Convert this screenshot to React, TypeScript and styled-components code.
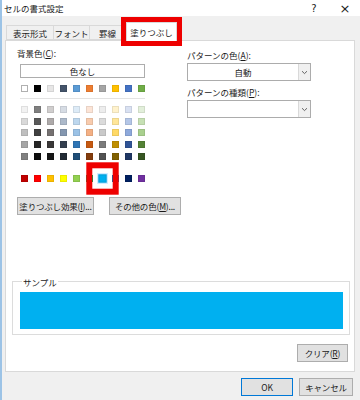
import React from 'react';
import styled, { createGlobalStyle } from 'styled-components';

const GlobalStyle = createGlobalStyle`
  html, body {
    margin: 0;
    padding: 0;
    background: #f0f0f0;
  }
  * {
    box-sizing: border-box;
  }
`;

const themeRow = ['#FFFFFF', '#000000', '#E7E6E6', '#44546A', '#5B9BD5', '#ED7D31', '#A5A5A5', '#FFC000', '#4472C4', '#70AD47'];
const tintRows = [
  ['#F2F2F2', '#7F7F7F', '#D0CECE', '#D6DCE4', '#DDEBF7', '#FCE4D6', '#EDEDED', '#FFF2CC', '#D9E1F2', '#E2EFDA'],
  ['#D9D9D9', '#595959', '#AEAAAA', '#ACB9CA', '#BDD7EE', '#F8CBAD', '#DBDBDB', '#FFE699', '#B4C6E7', '#C6E0B4'],
  ['#BFBFBF', '#404040', '#757171', '#8497B0', '#9BC2E6', '#F4B084', '#C9C9C9', '#FFD966', '#8EA9DB', '#A9D08E'],
  ['#A6A6A6', '#262626', '#3A3838', '#333F4F', '#2F75B5', '#C65911', '#7B7B7B', '#BF8F00', '#305496', '#548235'],
  ['#808080', '#0D0D0D', '#161616', '#222B35', '#1F4E78', '#833C0C', '#525252', '#806000', '#203764', '#375623'],
];
const standardRow = ['#C00000', '#FF0000', '#FFC000', '#FFFF00', '#92D050', '#00B050', '#00B0F0', '#0070C0', '#002060', '#7030A0'];
const SELECTED = 6;

const tabs = ['表示形式', 'フォント', '罫線', '塗りつぶし'];
const tabWidths = [48, 37, 37, 51];

const Window = styled.div`
  width: 360px;
  height: 400px;
  display: flex;
  flex-direction: column;
  border-left: 2px solid #9cc3e6;
  background: #f0f0f0;
  font-family: 'Noto Sans CJK JP', 'Noto Sans', sans-serif;
  font-size: 8.5px;
  color: #1a1a1a;
  overflow: hidden;
`;

const TitleBar = styled.div`
  height: 16px;
  background: #fff;
  display: flex;
  align-items: center;
  padding-left: 2px;
`;

const Title = styled.span`
  flex: 1;
`;

const TitleButton = styled.span<{ $w: number; $size: number }>`
  width: ${(p) => p.$w}px;
  text-align: center;
  font-family: 'DejaVu Sans', sans-serif;
  font-size: ${(p) => p.$size}px;
  color: #222;
`;

const Body = styled.div`
  flex: 1;
  display: flex;
  flex-direction: column;
  padding: 6px 3px 0 3px;
`;

const TabRow = styled.div`
  display: flex;
  align-items: flex-end;
  height: 18px;
  padding-left: 1px;
`;

const Tab = styled.div<{ $active?: boolean; $w: number }>`
  width: ${(p) => p.$w}px;
  height: ${(p) => (p.$active ? 19 : 15)}px;
  margin-bottom: ${(p) => (p.$active ? -1 : 0)}px;
  margin-left: ${(p) => (p.$active ? 1 : 0)}px;
  margin-right: -1px;
  display: flex;
  align-items: center;
  justify-content: center;
  white-space: nowrap;
  background: ${(p) => (p.$active ? '#fff' : '#f0f0f0')};
  border: 1px solid #d9d9d9;
  border-bottom: ${(p) => (p.$active ? 'none' : '1px solid #d9d9d9')};
  position: relative;
  z-index: ${(p) => (p.$active ? 2 : 1)};
  outline: ${(p) => (p.$active ? '5px solid #ee0000' : 'none')};
`;

const Panel = styled.div`
  width: 350px;
  height: 332px;
  background: #fff;
  border: 1px solid #d9d9d9;
  display: flex;
  flex-direction: column;
  padding: 6px 6px 8px 11px;
`;

const Columns = styled.div`
  display: flex;
`;

const LeftCol = styled.div`
  width: 170px;
  display: flex;
  flex-direction: column;
`;

const RightCol = styled.div`
  display: flex;
  flex-direction: column;
  padding-top: 2px;
`;

const Label = styled.div`
  height: 12px;
  line-height: 12px;
  white-space: nowrap;
`;

const Btn = styled.div<{ $w: number; $default?: boolean }>`
  width: ${(p) => p.$w}px;
  height: 18px;
  display: flex;
  align-items: center;
  justify-content: center;
  background: #e1e1e1;
  border: 1px solid ${(p) => (p.$default ? '#0078d7' : '#adadad')};
  white-space: nowrap;
  letter-spacing: -0.2px;
`;

const NoColor = styled.div`
  width: 125px;
  height: 14px;
  margin: 5px 0 0 3px;
  border: 1px solid #adadad;
  display: flex;
  align-items: center;
  justify-content: center;
`;

const Palette = styled.div<{ $mt: number }>`
  display: grid;
  grid-template-columns: repeat(10, 7px);
  column-gap: 6px;
  row-gap: 4.7px;
  margin: ${(p) => p.$mt}px 0 0 4px;
`;

const Swatch = styled.div<{ $c: string; $selected?: boolean }>`
  width: 7px;
  height: 7px;
  background: ${(p) => p.$c};
  border: 1px solid ${(p) => (p.$c === '#FFFFFF' ? '#b0b0b0' : 'rgba(0,0,0,0.08)')};
  ${(p) =>
    p.$selected &&
    `
    transform: scale(1.2);
    box-shadow: 0 0 0 1px #cde8ff;
    outline: 5px solid #ee0000;
    outline-offset: 5px;
    position: relative;
    z-index: 2;
  `}
`;

const Separator = styled.div`
  width: 125px;
  height: 1px;
  background: #e3e3e3;
  margin: 6px 0 0 3px;
`;

const ButtonRow = styled.div`
  display: flex;
  gap: 15px;
  margin-top: 15px;
`;

const Combo = styled.div`
  width: 124px;
  height: 18px;
  border: 1px solid #acacac;
  background: #fff;
  display: flex;
  margin: 2px 0 5px 0;
`;

const ComboValue = styled.div`
  flex: 1;
  display: flex;
  align-items: center;
  justify-content: center;
`;

const ComboArrow = styled.div`
  width: 12px;
  border-left: 1px solid #d9d9d9;
  background: #f0f0f0;
  display: flex;
  align-items: center;
  justify-content: center;
`;

const Group = styled.fieldset`
  margin: 62px 0 0 -5px;
  width: 338px;
  height: 58px;
  border: 1px solid #dcdcdc;
  padding: 6px 6px 5px 7px;
`;

const Legend = styled.legend`
  padding: 0 1px;
  margin-left: 2px;
  line-height: 10px;
`;

const Sample = styled.div`
  height: 37px;
  background: #00b0f0;
  margin-top: -1px;
`;

const ClearRow = styled.div`
  display: flex;
  justify-content: flex-end;
  margin-top: 9px;
`;

const Footer = styled.div`
  display: flex;
  justify-content: flex-end;
  gap: 6px;
  padding: 6px 4px 0 0;
`;

const Chevron = () => (
  <svg width="7" height="5" viewBox="0 0 7 5">
    <path d="M1 1.2 L3.5 3.6 L6 1.2" fill="none" stroke="#555" strokeWidth="0.9" />
  </svg>
);

export default function App() {
  return (
    <>
      <GlobalStyle />
      <Window>
        <TitleBar>
          <Title>セルの書式設定</Title>
          <TitleButton $w={32} $size={10}>?</TitleButton>
          <TitleButton $w={30} $size={13}>×</TitleButton>
        </TitleBar>
        <Body>
          <TabRow>
            {tabs.map((t, i) => (
              <Tab key={t} $w={tabWidths[i]} $active={i === 3}>
                {t}
              </Tab>
            ))}
          </TabRow>
          <Panel>
            <Columns>
              <LeftCol>
                <Label>
                  背景色(<u>C</u>):
                </Label>
                <NoColor>色なし</NoColor>
                <Palette $mt={7}>
                  {themeRow.map((c) => (
                    <Swatch key={c} $c={c} />
                  ))}
                </Palette>
                <Separator />
                <Palette $mt={7}>
                  {tintRows.flat().map((c, i) => (
                    <Swatch key={i} $c={c} />
                  ))}
                </Palette>
                <Palette $mt={15}>
                  {standardRow.map((c, i) => (
                    <Swatch key={i} $c={c} $selected={i === SELECTED} />
                  ))}
                </Palette>
                <ButtonRow>
                  <Btn $w={77}>
                    塗りつぶし効果(<u>I</u>)...
                  </Btn>
                  <Btn $w={72}>
                    その他の色(<u>M</u>)...
                  </Btn>
                </ButtonRow>
              </LeftCol>
              <RightCol>
                <Label>
                  パターンの色(<u>A</u>):
                </Label>
                <Combo>
                  <ComboValue>自動</ComboValue>
                  <ComboArrow>
                    <Chevron />
                  </ComboArrow>
                </Combo>
                <Label>
                  パターンの種類(<u>P</u>):
                </Label>
                <Combo>
                  <ComboValue />
                  <ComboArrow>
                    <Chevron />
                  </ComboArrow>
                </Combo>
              </RightCol>
            </Columns>
            <Group>
              <Legend>サンプル</Legend>
              <Sample />
            </Group>
            <ClearRow>
              <Btn $w={51}>
                クリア(<u>R</u>)
              </Btn>
            </ClearRow>
          </Panel>
          <Footer>
            <Btn $w={52} $default>
              OK
            </Btn>
            <Btn $w={54}>キャンセル</Btn>
          </Footer>
        </Body>
      </Window>
    </>
  );
}
